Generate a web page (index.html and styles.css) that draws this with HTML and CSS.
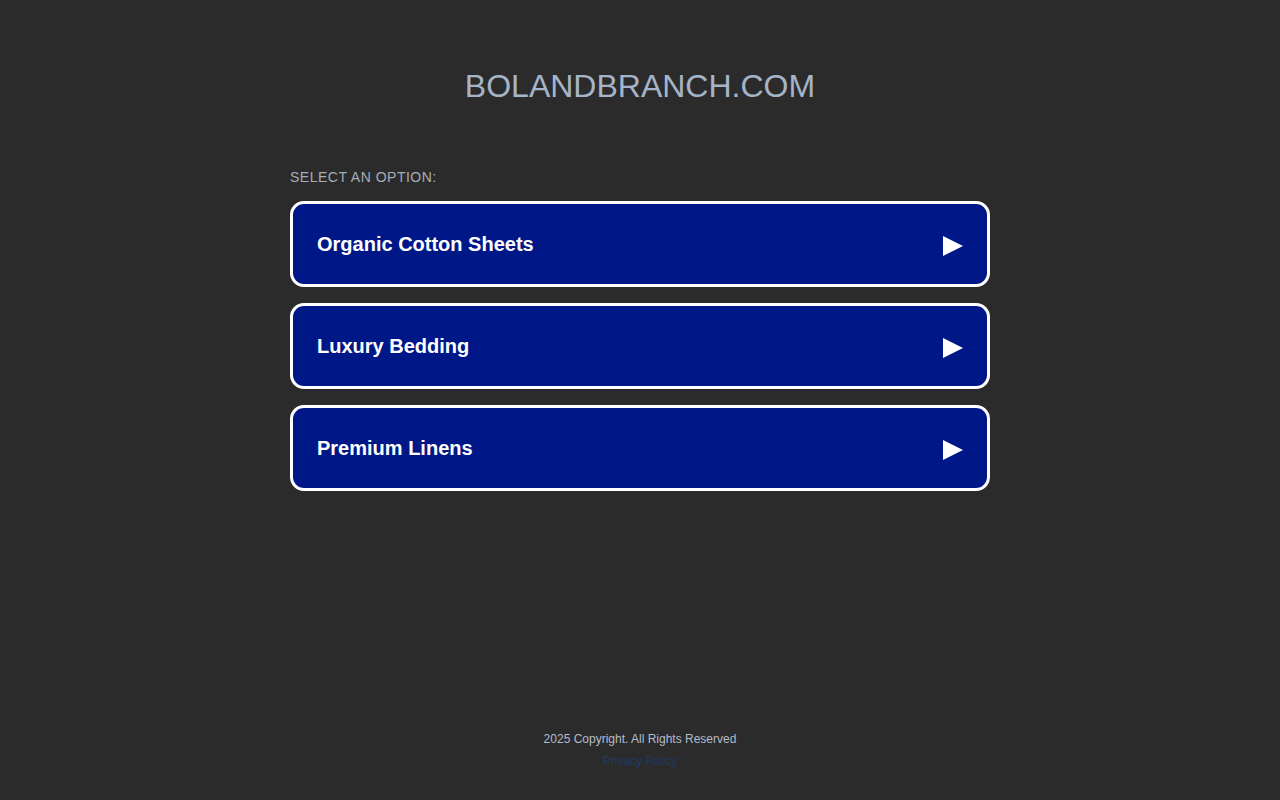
FILE: index.html
```html
<!DOCTYPE html>
<html>
<head>
<meta charset="utf-8">
<link rel="stylesheet" href="styles.css">
</head>
<body>
<div class="page">
  <header class="header">
    <h1 class="domain">BOLANDBRANCH.COM</h1>
  </header>
  <main class="main">
    <p class="label">SELECT AN OPTION:</p>
    <ul class="options">
      <li><a class="option" href="#"><span>Organic Cotton Sheets</span><svg class="arrow" viewBox="0 0 20 20" width="20" height="20"><polygon points="0,0 20,10 0,20" fill="#fff"/></svg></a></li>
      <li><a class="option" href="#"><span>Luxury Bedding</span><svg class="arrow" viewBox="0 0 20 20" width="20" height="20"><polygon points="0,0 20,10 0,20" fill="#fff"/></svg></a></li>
      <li><a class="option" href="#"><span>Premium Linens</span><svg class="arrow" viewBox="0 0 20 20" width="20" height="20"><polygon points="0,0 20,10 0,20" fill="#fff"/></svg></a></li>
    </ul>
  </main>
  <footer class="footer">
    <p class="copy">2025 Copyright. All Rights Reserved</p>
    <a class="privacy" href="#">Privacy Policy</a>
  </footer>
</div>
</body>
</html>
```
FILE: styles.css
```css
html, body {
  margin: 0;
  padding: 0;
  background: #2b2b2b;
  font-family: Arial, "Liberation Sans", sans-serif;
}
.page {
  height: 800px;
  display: flex;
  flex-direction: column;
  align-items: center;
}
.header {
  padding-top: 67px;
}
.domain {
  margin: 0;
  font-size: 32px;
  font-weight: normal;
  line-height: 38px;
  color: #a6b4c8;
}
.main {
  width: 700px;
  margin-top: 63px;
}
.label {
  margin: 0 0 15px 0;
  font-size: 14px;
  line-height: 18px;
  letter-spacing: 0.5px;
  color: #a6adba;
}
.options {
  list-style: none;
  margin: 0;
  padding: 0;
  display: flex;
  flex-direction: column;
  gap: 16px;
}
.option {
  box-sizing: border-box;
  height: 86px;
  display: flex;
  align-items: center;
  justify-content: space-between;
  padding: 0 24px 0 24px;
  border: 3px solid #fff;
  border-radius: 14px;
  background: #001887;
  color: #fff;
  text-decoration: none;
  font-size: 20px;
  font-weight: bold;
}
.arrow {
  display: block;
  margin-top: 3px;
}
.footer {
  margin-top: auto;
  padding-bottom: 31px;
  text-align: center;
}
.copy {
  margin: 0 0 4px 0;
  font-size: 12px;
  line-height: 16px;
  color: #b4bccb;
}
.privacy {
  font-size: 12px;
  line-height: 16px;
  color: #1e3a66;
  text-decoration: none;
}
```
